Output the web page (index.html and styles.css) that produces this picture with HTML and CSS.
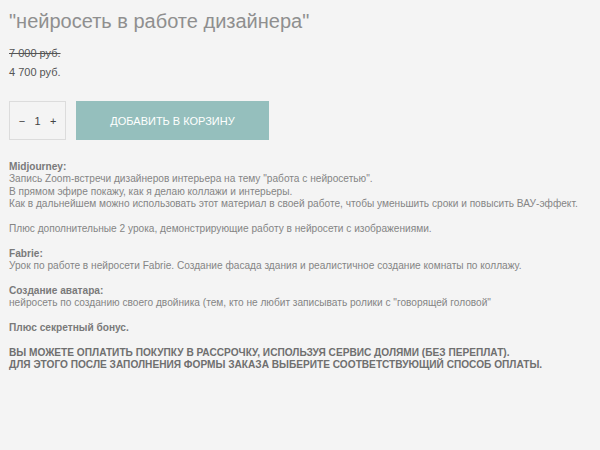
FILE: index.html
```html
<!DOCTYPE html>
<html lang="ru">
<head>
    <meta charset="UTF-8">
    <meta name="viewport" content="width=device-width, initial-scale=1.0">
    <title>нейросеть в работе дизайнера</title>
    <link rel="stylesheet" href="styles.css">
</head>
<body>
    <div class="product">
        <h1 class="product-title">"нейросеть в работе дизайнера"</h1>

        <div class="prices">
            <div class="price-old">7 000 руб.</div>
            <div class="price-new">4 700 руб.</div>
        </div>

        <!-- количество и кнопка -->
        <div class="buy-row">
            <div class="qty">
                <span class="qty-btn">&minus;</span>
                <span class="qty-value">1</span>
                <span class="qty-btn">+</span>
            </div>
            <button class="cart-btn">Добавить в корзину</button>
        </div>

        <div class="description">
            <p>
                <strong>Midjourney:</strong><br>
                Запись Zoom-встречи дизайнеров интерьера на тему "работа с нейросетью".<br>
                В прямом эфире покажу, как я делаю коллажи и интерьеры.<br>
                Как в дальнейшем можно использовать этот материал в своей работе, чтобы уменьшить сроки и повысить ВАУ-эффект.
            </p>
            <p>Плюс дополнительные 2 урока, демонстрирующие работу в нейросети с изображениями.</p>
            <p>
                <strong>Fabrie:</strong><br>
                Урок по работе в нейросети Fabrie. Создание фасада здания и реалистичное создание комнаты по коллажу.
            </p>
            <p>
                <strong>Создание аватара:</strong><br>
                нейросеть по созданию своего двойника (тем, кто не любит записывать ролики с "говорящей головой"
            </p>
            <p><strong>Плюс секретный бонус.</strong></p>
            <p class="note">
                ВЫ МОЖЕТЕ ОПЛАТИТЬ ПОКУПКУ В РАССРОЧКУ, ИСПОЛЬЗУЯ СЕРВИС ДОЛЯМИ (БЕЗ ПЕРЕПЛАТ).<br>
                ДЛЯ ЭТОГО ПОСЛЕ ЗАПОЛНЕНИЯ ФОРМЫ ЗАКАЗА ВЫБЕРИТЕ СООТВЕТСТВУЮЩИЙ СПОСОБ ОПЛАТЫ.
            </p>
        </div>
    </div>
</body>
</html>
```

FILE: styles.css
```css
:root {
    --bg-color: #f4f4f4;
    --text-color: #858585;
    --accent-color: #95bfbd;
}

body {
    background: var(--bg-color);
    font-family: 'Liberation Sans', Arial, sans-serif;
    color: var(--text-color);
    margin: 0;
}

.product {
    padding: 9px 9px 0 9px;
}

.product-title {
    font-size: 20px;
    font-weight: normal;
    color: #8f8f8f;
    margin: 0;
    line-height: 24px;
}

.prices {
    margin-top: 11px;
    font-size: 11px;
    line-height: 19px;
    color: #555;
}

.price-old {
    text-decoration: line-through;
}

.buy-row {
    display: flex;
    gap: 10px;
    margin-top: 19px;
}

.qty {
    width: 57px;
    height: 39px;
    box-sizing: border-box;
    border: 1px solid #dcdcdc;
    display: flex;
    align-items: center;
    justify-content: space-around;
    padding: 0 4px;
    font-size: 11px;
    color: #444;
}

.cart-btn {
    width: 193px;
    height: 39px;
    border: none;
    background: var(--accent-color);
    color: #fff;
    font-family: inherit;
    font-size: 11px;
    text-transform: uppercase;
    padding: 0;
}

.description {
    margin-top: 21px;
    font-size: 10.15px;
    line-height: 12.4px;
}

.description p {
    margin: 0 0 12.4px 0;
}

.description strong {
    color: #7a7a7a;
}

.note {
    font-weight: bold;
    color: #6f6f6f;
}
```
